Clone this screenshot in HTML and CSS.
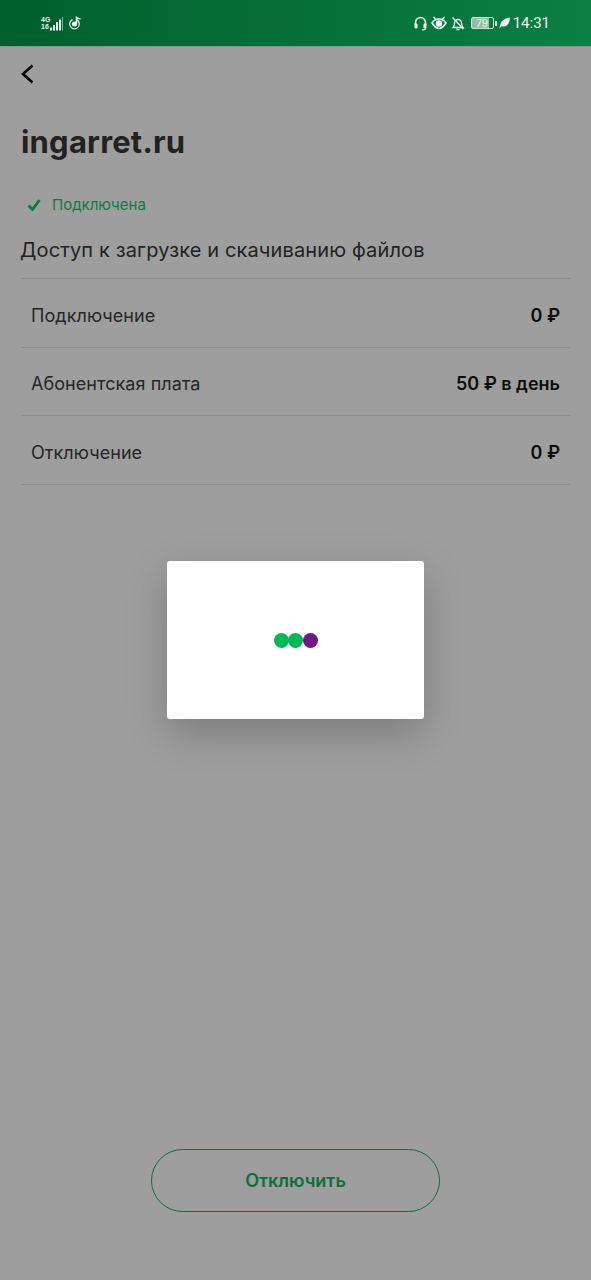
FILE: index.html
```html
<!DOCTYPE html>
<html lang="ru">
<head>
<meta charset="utf-8">
<title>ingarret.ru</title>
<link rel="stylesheet" href="styles.css">
</head>
<body>
<div class="app">
  <header class="status">
    <div class="status-left">
      <div class="net"><span>4G</span><span>16</span></div>
      <svg class="signal" width="13" height="14" viewBox="0 0 13 14"><g fill="#e6f2ea"><rect x="0" y="10.500" width="2" height="3"/><rect x="3" y="8" width="2" height="5.500"/><rect x="6" y="5" width="2" height="8.500"/><rect x="9" y="2.500" width="2" height="11"/><rect x="12" y="0" width="1" height="13.500" opacity=".6"/></g></svg>
      <svg class="tiktok" width="13" height="14" viewBox="0 0 13 14"><circle cx="5.500" cy="8" r="4.800" fill="none" stroke="#e6f2ea" stroke-width="1.200" stroke-dasharray="20 4"/><circle cx="5.500" cy="8" r="2.500" fill="#fff"/><path d="M7.500 7.500V1.500C8.500 2.500 10 2.500 11.500 3" fill="none" stroke="#fff" stroke-width="1.500"/></svg>
    </div>
    <div class="status-right">
      <svg width="13" height="15" viewBox="0 0 13 15"><path d="M1.500 9.500V6.500a5 5 0 0 1 10 0v3" fill="none" stroke="#f0f7f2" stroke-width="1.600"/><rect x=".5" y="7.500" width="3" height="5" rx="1.200" fill="#f0f7f2"/><rect x="9.500" y="7.500" width="3" height="5" rx="1.200" fill="#f0f7f2"/><path d="M11.500 12c0 1.500-1.500 2-3.500 2" fill="none" stroke="#f0f7f2" stroke-width="1.200"/></svg>
      <svg width="16" height="14" viewBox="0 0 16 14"><path d="M1 7c2-3 4.500-4 7-4s5 1 7 4c-2 3-4.500 5.500-7 5.500S3 10 1 7z" fill="none" stroke="#f0f7f2" stroke-width="1.600"/><circle cx="8" cy="7.500" r="3.200" fill="#f0f7f2"/><path d="M2.500 1l2.500 2.500M13.500 1L11 3.500" stroke="#f0f7f2" stroke-width="1.400"/></svg>
      <svg width="14" height="15" viewBox="0 0 14 15"><path d="M2 11.500c1.200-1 1.500-2 1.500-4.500a3.500 3.500 0 0 1 7 0c0 2.500.300 3.500 1.500 4.500z" fill="none" stroke="#e6f2ea" stroke-width="1.300"/><path d="M5.500 13.500h3M1.500 1.500l11 11.500" stroke="#e6f2ea" stroke-width="1.300"/></svg>
      <div class="battery"><span class="battery-body">79</span><span class="battery-tip"></span></div>
      <svg class="leaf" width="11" height="12" viewBox="0 0 11 12"><path d="M.5 11.500C1 5 4 1.500 10.800 .5 10.800 7.500 7 10.500 2.500 9.300z" fill="#f0f7f2"/></svg>
      <span class="clock">14:31</span>
    </div>
  </header>
  <main class="screen">
    <button class="back" type="button" aria-label="Назад">
      <svg width="14" height="20" viewBox="0 0 14 20"><path d="M11.500 1.500L2 10l9.500 8.500" fill="none" stroke="#000" stroke-width="2.600"/></svg>
    </button>
    <h1 class="title">ingarret.ru</h1>
    <div class="state">
      <svg width="14" height="12" viewBox="0 0 14 12"><path d="M1.500 6.500l4 4L12.500 1" fill="none" stroke="#0a7a43" stroke-width="2.800"/></svg>
      <span>Подключена</span>
    </div>
    <p class="desc">Доступ к загрузке и скачиванию файлов</p>
    <div class="rows">
      <div class="row"><span>Подключение</span><b>0 ₽</b></div>
      <div class="row"><span>Абонентская плата</span><b>50 ₽ в день</b></div>
      <div class="row"><span>Отключение</span><b>0 ₽</b></div>
    </div>
    <div class="spacer"></div>
    <button class="off" type="button">Отключить</button>
  </main>
  <div class="loader">
    <div class="dots"><i class="dot green"></i><i class="dot green"></i><i class="dot purple"></i></div>
  </div>
</div>
</body>
</html>
```
FILE: styles.css
```css
* { box-sizing: border-box; }
html, body { margin: 0; padding: 0; }
body { font-family: Inter, "Liberation Sans", sans-serif; background: #9e9e9e; }
.app { position: relative; width: 591px; height: 1280px; display: flex; flex-direction: column; overflow: hidden; background: #9e9e9e; }

.status { height: 46px; flex: none; display: flex; justify-content: space-between; align-items: center; padding: 0 41px; background: linear-gradient(90deg, #005f2d 0%, #0b7f43 100%); box-shadow: 0 1px 0 #7f9a88; }
.status-left { display: flex; align-items: center; }
.net { display: flex; flex-direction: column; font-family: "Liberation Sans", sans-serif; font-size: 7px; line-height: 7px; font-weight: 700; color: #e6f2ea; width: 9px; }
.signal { margin-top: 1px; }
.tiktok { margin-left: 6px; }
.status-right { display: flex; align-items: center; gap: 4px; }
.status-right svg { display: block; }
.battery { display: flex; align-items: center; margin-left: 2px; }
.battery-body { width: 23px; height: 12px; border: 1px solid #cfe3d6; border-radius: 2px; background: linear-gradient(90deg, #8fbfa2 79%, transparent 79%); color: #f0f7f2; font-size: 10px; line-height: 10px; text-align: center; }
.battery-tip { width: 2px; height: 5px; margin-left: 1px; background: #cfe3d6; }
.leaf { margin-left: -2px; }
.clock { font-family: Roboto, sans-serif; font-size: 15px; color: #f0f7f2; margin-left: -1px; }

.screen { flex: 1; display: flex; flex-direction: column; padding: 0 21px 68px; }
.back { align-self: flex-start; display: block; margin: 18px 0 0; padding: 0; border: 0; background: none; height: 20px; line-height: 0; }
.title { margin: 39px 0 0; font-size: 31px; line-height: 38px; font-weight: 700; color: #222; letter-spacing: .2px; }
.state { display: flex; align-items: center; gap: 11px; margin: 34px 0 0 6px; font-size: 15px; line-height: 20px; color: #0f7a45; }
.desc { margin: 22px 0 0 -1px; padding-bottom: 15px; font-size: 20px; line-height: 26px; letter-spacing: .13px; color: #222; }
.rows { border-top: 1px solid #8c8c8c; }
.row { height: 68.500px; display: flex; justify-content: space-between; align-items: center; padding: 5px 10px 0; border-bottom: 1px solid #8c8c8c; font-size: 18px; letter-spacing: .06px; color: #262626; }
.row b { font-weight: 600; color: #0c0c0c; letter-spacing: 0; }
.spacer { flex: 1; }
.off { align-self: center; width: 289px; height: 63px; padding-bottom: 2px; border: 1px solid #07703c; border-radius: 32px; background: none; font-family: inherit; font-size: 18px; font-weight: 600; color: #0a6f3c; }

.loader { position: absolute; left: 167px; top: 561px; width: 257px; height: 158px; display: flex; align-items: center; justify-content: center; background: #fff; border-radius: 3px; box-shadow: 0 14px 40px rgba(0, 0, 0, .22); }
.dots { display: flex; }
.dot { display: block; width: 15px; height: 15px; border-radius: 50%; margin-right: -.5px; }
.green { background: #00b956; }
.purple { background: #731982; }
```
